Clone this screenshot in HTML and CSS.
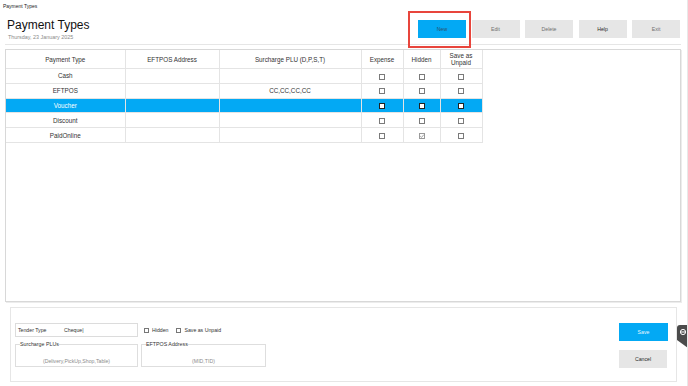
FILE: index.html
```html
<!DOCTYPE html>
<html lang="en">
<head>
<meta charset="utf-8">
<title>Payment Types</title>
<link rel="stylesheet" href="styles.css">
</head>
<body>
<div class="app">
  <div class="titlebar">Payment Types</div>
  <header class="header">
    <div class="title-block">
      <h1 class="title">Payment Types</h1>
      <div class="date">Thursday, 23 January 2025</div>
    </div>
    <div class="toolbar">
      <button class="btn btn-primary">New</button>
      <button class="btn">Edit</button>
      <button class="btn">Delete</button>
      <button class="btn btn-dark">Help</button>
      <button class="btn">Exit</button>
    </div>
  </header>

  <section class="grid-panel">
    <table class="grid">
      <colgroup>
        <col class="c1"><col class="c2"><col class="c3"><col class="c4"><col class="c5"><col class="c6">
      </colgroup>
      <thead>
        <tr>
          <th>Payment Type</th>
          <th>EFTPOS Address</th>
          <th>Surcharge PLU (D,P,S,T)</th>
          <th>Expense</th>
          <th>Hidden</th>
          <th>Save as<br>Unpaid</th>
        </tr>
      </thead>
      <tbody>
        <tr>
          <td>Cash</td><td></td><td></td>
          <td><span class="cb"></span></td><td><span class="cb"></span></td><td><span class="cb"></span></td>
        </tr>
        <tr>
          <td>EFTPOS</td><td></td><td>CC,CC,CC,CC</td>
          <td><span class="cb"></span></td><td><span class="cb"></span></td><td><span class="cb"></span></td>
        </tr>
        <tr class="selected">
          <td>Voucher</td><td></td><td></td>
          <td><span class="cb"></span></td><td><span class="cb"></span></td><td><span class="cb"></span></td>
        </tr>
        <tr>
          <td>Discount</td><td></td><td></td>
          <td><span class="cb"></span></td><td><span class="cb"></span></td><td><span class="cb"></span></td>
        </tr>
        <tr>
          <td>PaidOnline</td><td></td><td></td>
          <td><span class="cb"></span></td>
          <td><span class="cb checked"><svg viewBox="0 0 6 6" width="6" height="6"><path d="M1.2 3.1 L2.5 4.4 L4.9 1.6" fill="none" stroke="#8a8a8a" stroke-width="0.8"/></svg></span></td>
          <td><span class="cb"></span></td>
        </tr>
      </tbody>
    </table>
  </section>

  <section class="form-panel">
    <div class="form-left">
      <div class="form-row">
        <div class="field"><span class="field-label">Tender Type</span><span class="field-value">Cheque|</span></div>
        <label class="check"><span class="cb small"></span>Hidden</label>
        <label class="check"><span class="cb small"></span>Save as Unpaid</label>
      </div>
      <div class="form-row groups">
        <fieldset class="group g1">
          <legend>Surcharge PLUs</legend>
          <div class="placeholder">(Delivery,PickUp,Shop,Table)</div>
        </fieldset>
        <fieldset class="group g2">
          <legend>EFTPOS Address</legend>
          <div class="placeholder">(MID,TID)</div>
        </fieldset>
      </div>
    </div>
    <div class="form-actions">
      <button class="btn btn-save">Save</button>
      <button class="btn btn-dark">Cancel</button>
    </div>
  </section>

  <div class="highlight"></div>
  <div class="side-tab">
    <svg viewBox="0 0 11 23" width="11" height="23">
      <path d="M3 0 H11 V23 L0 15 V3 Q0 0 3 0 Z" fill="#4b4b4b"/>
      <circle cx="6" cy="7" r="2.6" fill="none" stroke="#ffffff" stroke-width="1"/>
      <path d="M3.6 7 H8.4" stroke="#ffffff" stroke-width="1"/>
    </svg>
  </div>
</div>
</body>
</html>
```

FILE: styles.css
```css
* { box-sizing: border-box; }
html, body { margin: 0; padding: 0; background: #ffffff; }
body { font-family: "Liberation Sans", Arial, sans-serif; color: #333; }

.app {
  position: relative;
  width: 688px;
  height: 386px;
  border-right: 1px solid #e8e8e8;
  overflow: hidden;
}

.titlebar {
  height: 12px;
  font-size: 5px;
  line-height: 12px;
  padding-left: 3px;
  color: #222;
}

.header {
  display: flex;
  justify-content: space-between;
  align-items: flex-start;
  height: 33px;
  margin: 0 6px 0 5px;
  padding: 0 1px 0 2px;
  border-bottom: 1px solid #e6e6e6;
}

.title-block { padding-top: 6px; }
.title {
  margin: 0;
  font-weight: normal;
  font-size: 12px;
  line-height: 14px;
  color: #111;
}
.date {
  font-size: 5.4px;
  line-height: 7px;
  color: #8a8a8a;
  margin-top: 2px;
  padding-left: 1px;
}

.toolbar {
  display: flex;
  gap: 5.5px;
  padding-top: 8px;
}

.btn {
  width: 48px;
  height: 18px;
  border: none;
  background: #e6e6e6;
  color: #707070;
  font-family: "Liberation Sans", Arial, sans-serif;
  font-size: 5.2px;
  padding: 0;
  margin: 0;
}
.btn-dark { color: #2a2a2a; }
.btn-primary { background: #03a9f4; color: #2d4f6a; }
.btn-save { background: #03a9f4; color: #e8f6ff; width: 49px; }

.grid-panel {
  margin: 4px 6px 0 5px;
  height: 253px;
  border: 1px solid #d8d8d8;
  box-shadow: 1px 1px 0 #ececec;
}

.grid {
  border-collapse: collapse;
  table-layout: fixed;
  width: 476px;
  font-size: 6.3px;
  color: #333;
}
.grid col.c1 { width: 119px; }
.grid col.c2 { width: 94px; }
.grid col.c3 { width: 142px; }
.grid col.c4 { width: 42px; }
.grid col.c5 { width: 37px; }
.grid col.c6 { width: 42px; }

.grid th, .grid td {
  border-right: 1px solid #e4e4e4;
  border-bottom: 1px solid #e4e4e4;
  text-align: center;
  padding: 0;
  font-weight: normal;
  vertical-align: middle;
}
.grid th { height: 18.5px; line-height: 7px; }
.grid td { height: 14.8px; line-height: 7px; }

.grid tr.selected td { background: #03a9f4; color: #ffffff; }

.cb {
  display: inline-block;
  width: 6px;
  height: 6px;
  border: 1px solid #7a7a7a;
  background: #fff;
  vertical-align: middle;
  position: relative;
}
.cb svg { position: absolute; left: -1px; top: -1px; }
.cb.checked { border-color: #9a9a9a; }
.selected .cb { border-color: #222; }

.form-panel {
  display: flex;
  justify-content: space-between;
  align-items: flex-start;
  margin: 5px 10px 0 10px;
  height: 75px;
  border: 1px solid #e6e6e6;
  padding: 15px 8px 0 4px;
}

.form-left { display: flex; flex-direction: column; }
.form-row { display: flex; align-items: center; }

.field {
  width: 123px;
  height: 14px;
  border: 1px solid #dcdcdc;
  display: flex;
  align-items: center;
  padding-left: 2px;
  font-size: 5.2px;
  color: #333;
}
.field-label { width: 46px; }

.check {
  display: flex;
  align-items: center;
  font-size: 5.2px;
  color: #333;
  margin-left: 6px;
}
.check + .check { margin-left: 8px; }
.cb.small { width: 5px; height: 5px; margin-right: 3px; border-color: #777; }

.groups { margin-top: 4px; gap: 3px; align-items: flex-start; }

.group {
  margin: 0;
  padding: 0 4px;
  border: 1px solid #dedede;
  height: 26px;
  min-width: 0;
}
.group.g1 { width: 123px; }
.group.g2 { width: 125px; }
.group legend {
  padding: 0;
  font-size: 5.3px;
  line-height: 6px;
  color: #333;
}
.placeholder {
  text-align: center;
  font-size: 5.2px;
  line-height: 7px;
  color: #8c8c8c;
  padding-top: 11px;
}

.form-actions {
  display: flex;
  flex-direction: column;
  gap: 8.5px;
}

.highlight {
  position: absolute;
  left: 408px;
  top: 11px;
  width: 63px;
  height: 37px;
  border: 2px solid #e8453c;
}

.side-tab {
  position: absolute;
  left: 677px;
  top: 325px;
  width: 11px;
  height: 23px;
}
.side-tab svg { display: block; }
```
